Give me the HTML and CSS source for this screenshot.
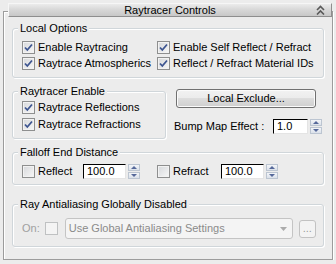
FILE: index.html
```html
<!DOCTYPE html>
<html lang="en">
<head>
  <meta charset="UTF-8">
  <title>Raytracer Controls</title>
  <link rel="stylesheet" href="styles.css">
</head>
<body>
  <div class="rollout">
    <div class="title-bar">
      <span></span>
      <span class="title">Raytracer Controls</span>
      <svg class="collapse" width="9" height="10" viewBox="0 0 9 10">
        <polyline points="1,5 4.5,1.5 8,5" />
        <polyline points="1,9.5 4.5,6 8,9.5" />
      </svg>
    </div>

    <fieldset class="group local-options">
      <legend>Local Options</legend>
      <div class="opt-grid">
        <label class="opt"><span class="box"><svg width="11" height="11" viewBox="0 0 11 11"><path d="M2 5.5 L4.3 8 L9 2.5" /></svg></span>Enable Raytracing</label>
        <label class="opt"><span class="box"><svg width="11" height="11" viewBox="0 0 11 11"><path d="M2 5.5 L4.3 8 L9 2.5" /></svg></span>Enable Self Reflect / Refract</label>
        <label class="opt"><span class="box"><svg width="11" height="11" viewBox="0 0 11 11"><path d="M2 5.5 L4.3 8 L9 2.5" /></svg></span>Raytrace Atmospherics</label>
        <label class="opt"><span class="box"><svg width="11" height="11" viewBox="0 0 11 11"><path d="M2 5.5 L4.3 8 L9 2.5" /></svg></span>Reflect / Refract Material IDs</label>
      </div>
    </fieldset>

    <div class="middle">
      <fieldset class="group enable">
        <legend>Raytracer Enable</legend>
        <div class="opt-list">
          <label class="opt"><span class="box"><svg width="11" height="11" viewBox="0 0 11 11"><path d="M2 5.5 L4.3 8 L9 2.5" /></svg></span>Raytrace Reflections</label>
          <label class="opt"><span class="box"><svg width="11" height="11" viewBox="0 0 11 11"><path d="M2 5.5 L4.3 8 L9 2.5" /></svg></span>Raytrace Refractions</label>
        </div>
      </fieldset>

      <div class="side">
        <button class="btn">Local Exclude...</button>
        <div class="bump">
          <span>Bump Map Effect :</span>
          <span class="spin-field">
            <span class="field bump-field">1.0</span>
            <span class="spinner"><span class="spin-up"><i></i></span><span class="spin-down"><i></i></span></span>
          </span>
        </div>
      </div>
    </div>

    <fieldset class="group falloff">
      <legend>Falloff End Distance</legend>
      <div class="falloff-row">
        <label class="opt reflect"><span class="box"></span>Reflect</label>
        <span class="spin-field">
          <span class="field">100.0</span>
          <span class="spinner"><span class="spin-up"><i></i></span><span class="spin-down"><i></i></span></span>
        </span>
        <label class="opt refract"><span class="box"></span>Refract</label>
        <span class="spin-field">
          <span class="field">100.0</span>
          <span class="spinner"><span class="spin-up"><i></i></span><span class="spin-down"><i></i></span></span>
        </span>
      </div>
    </fieldset>

    <fieldset class="group antialias">
      <legend>Ray Antialiasing Globally Disabled</legend>
      <div class="aa-row">
        <span class="dim">On:</span>
        <span class="box disabled"></span>
        <div class="combo">
          <span>Use Global Antialiasing Settings</span>
          <svg class="arrow" width="7" height="4" viewBox="0 0 7 4"><polygon points="0,0 7,0 3.5,4" /></svg>
        </div>
        <button class="more">...</button>
      </div>
    </fieldset>
  </div>
</body>
</html>
```

FILE: styles.css
```css
body {
  margin: 0;
  background-color: #ececec;
  font-family: "Liberation Sans", Arial, sans-serif;
  font-size: 11px;
  line-height: 13px;
  color: #000;
}

/* outer rollout frame */
.rollout {
  margin: 11px 3px 0 3px;
  padding: 0 8px 12px 8px;
  border: 1px solid #9c9c9c;
  box-shadow: inset 1px 1px 0 #fff, 1px 1px 0 #fff;
}

.title-bar {
  display: grid;
  grid-template-columns: 1fr auto 1fr;
  align-items: center;
  height: 12px;
  margin: -9px -8px 0 -4px;
  border: 1px solid;
  border-color: #f6f6f6 #8e8e8e #8e8e8e #f6f6f6;
  background: linear-gradient(#ebebeb, #d8d8d8 45%, #c8c8c8);
}

.title {
  line-height: 12px;
}

.collapse {
  justify-self: end;
  margin-right: 6px;
  fill: none;
  stroke: #5a5a5a;
  stroke-width: 1.6;
}

/* group boxes */
.group {
  margin: 0;
  padding: 0 0 0 5px;
  min-width: 0;
  border: 1px solid #d0d6da;
  border-radius: 3px;
  box-shadow: inset 1px 1px 0 #fff, 1px 1px 0 #fff;
}

.group legend {
  padding: 0 2px;
  line-height: 13px;
  background-color: #ececec;
}

.local-options {
  margin-top: 5px;
}

.opt-grid {
  display: grid;
  grid-template-columns: 135px auto;
  grid-auto-rows: 16px;
  padding: 4px 0 6px 4px;
}

.opt {
  display: flex;
  align-items: center;
  gap: 3px;
  white-space: nowrap;
}

.box {
  flex: none;
  width: 13px;
  height: 13px;
  box-sizing: border-box;
  border: 1px solid #8e8f8f;
  background: linear-gradient(135deg, #d6d8db, #f7f7f7);
  box-shadow: inset 0 0 0 1px #f2f2f2;
}

.box svg {
  display: block;
  fill: none;
  stroke: #3d5590;
  stroke-width: 1.8;
}

.box.disabled {
  border-color: #bfc1c2;
  background: #f4f4f4;
  box-shadow: none;
}

/* middle part */
.middle {
  display: flex;
  margin-top: 7px;
}

.enable {
  width: 154px;
  box-sizing: border-box;
}

.opt-list {
  display: grid;
  grid-auto-rows: 17px;
  padding: 1px 0 5px 4px;
}

.side {
  flex: 1;
  display: flex;
  flex-direction: column;
  margin-left: 8px;
}

.btn {
  width: 140px;
  height: 19px;
  margin: 4px 0 0 2px;
  padding: 0;
  font: inherit;
  color: #000;
  border: 1px solid #707070;
  border-radius: 3px;
  background: linear-gradient(#f2f2f2, #ebebeb 50%, #dddddd 50%, #cfcfcf);
  box-shadow: inset 0 0 0 1px #fbfbfb;
}

.bump {
  display: flex;
  align-items: center;
  height: 15px;
  margin-top: 11px;
}

.bump .spin-field {
  margin-left: auto;
  margin-right: 2px;
}

.spin-field {
  display: flex;
  gap: 2px;
}

.field {
  width: 43px;
  height: 15px;
  box-sizing: border-box;
  padding-left: 3px;
  border: 1px solid;
  border-color: #000 #e4e4e4 #e4e4e4 #000;
  background-color: #fff;
  line-height: 13px;
}

.bump-field {
  width: 35px;
}

.spinner {
  display: flex;
  flex-direction: column;
  gap: 1px;
  width: 12px;
  height: 15px;
}

.spin-up, .spin-down {
  flex: 1;
  display: flex;
  align-items: center;
  justify-content: center;
  box-sizing: border-box;
  border: 1px solid #bcc5d1;
  background: linear-gradient(#f3f5f8, #dbe1ea);
}

.spin-up i, .spin-down i {
  width: 0;
  height: 0;
  border-left: 3px solid transparent;
  border-right: 3px solid transparent;
}

.spin-up i {
  border-bottom: 3px solid #56699a;
}

.spin-down i {
  border-top: 3px solid #56699a;
}

/* falloff */
.falloff {
  margin-top: 7px;
}

.falloff-row {
  display: flex;
  align-items: center;
  height: 18px;
  padding: 3px 0 4px 4px;
}

.reflect {
  width: 61px;
}

.refract {
  width: 64px;
  margin-left: 17px;
}

/* antialiasing */
.antialias {
  margin-top: 13px;
}

.aa-row {
  display: flex;
  align-items: center;
  height: 21px;
  padding: 7px 0 7px 4px;
}

.dim {
  color: #a0a0a0;
  margin-right: 5px;
}

.combo {
  display: flex;
  align-items: center;
  width: 228px;
  height: 21px;
  box-sizing: border-box;
  margin-left: 7px;
  padding: 0 5px 0 3px;
  border: 1px solid #c4c4c4;
  border-radius: 3px;
  background-color: #f4f4f4;
  color: #8b8b8b;
}

.arrow {
  margin-left: auto;
  fill: #ababab;
}

.more {
  width: 17px;
  height: 18px;
  margin-left: 6px;
  padding: 0;
  font: inherit;
  color: #9a9a9a;
  border: 1px solid #c2c2c2;
  border-radius: 3px;
  background-color: #f3f3f3;
}
```
